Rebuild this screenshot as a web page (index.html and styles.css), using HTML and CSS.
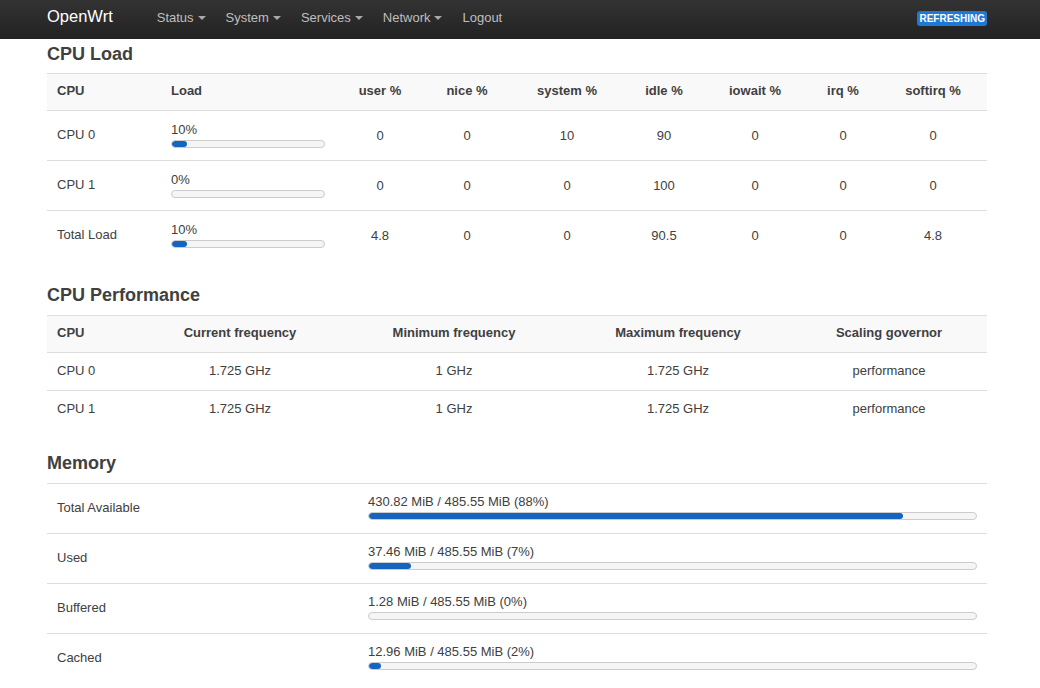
FILE: index.html
```html
<!DOCTYPE html>
<html>
<head>
<meta charset="utf-8">
<link rel="stylesheet" href="styles.css">
</head>
<body>
<header class="navbar">
  <div class="nav-inner">
    <a class="brand">OpenWrt</a>
    <ul class="nav">
      <li><a>Status <span class="caret"></span></a></li>
      <li><a>System <span class="caret"></span></a></li>
      <li><a>Services <span class="caret"></span></a></li>
      <li><a>Network <span class="caret"></span></a></li>
      <li><a>Logout</a></li>
    </ul>
    <span class="badge">REFRESHING</span>
  </div>
</header>
<main class="main">
  <h2>CPU Load</h2>
  <table class="tbl load">
    <colgroup>
      <col style="width:114px"><col style="width:174px"><col style="width:90px"><col style="width:84px"><col style="width:116px"><col style="width:78px"><col style="width:104px"><col style="width:72px"><col style="width:108px">
    </colgroup>
    <thead>
      <tr><th class="l">CPU</th><th class="l">Load</th><th>user %</th><th>nice %</th><th>system %</th><th>idle %</th><th>iowait %</th><th>irq %</th><th>softirq %</th></tr>
    </thead>
    <tbody>
      <tr><td class="l">CPU 0</td><td class="l barcell"><div class="pct">10%</div><div class="bar"><div class="fill" style="width:10%"></div></div></td><td>0</td><td>0</td><td>10</td><td>90</td><td>0</td><td>0</td><td>0</td></tr>
      <tr><td class="l">CPU 1</td><td class="l barcell"><div class="pct">0%</div><div class="bar"><div class="fill" style="width:0%"></div></div></td><td>0</td><td>0</td><td>0</td><td>100</td><td>0</td><td>0</td><td>0</td></tr>
      <tr><td class="l">Total Load</td><td class="l barcell"><div class="pct">10%</div><div class="bar"><div class="fill" style="width:10%"></div></div></td><td>4.8</td><td>0</td><td>0</td><td>90.5</td><td>0</td><td>0</td><td>4.8</td></tr>
    </tbody>
  </table>

  <h2>CPU Performance</h2>
  <table class="tbl perf">
    <colgroup>
      <col style="width:90px"><col style="width:206px"><col style="width:222px"><col style="width:226px"><col style="width:196px">
    </colgroup>
    <thead>
      <tr><th class="l">CPU</th><th>Current frequency</th><th>Minimum frequency</th><th>Maximum frequency</th><th>Scaling governor</th></tr>
    </thead>
    <tbody>
      <tr><td class="l">CPU 0</td><td>1.725 GHz</td><td>1 GHz</td><td>1.725 GHz</td><td>performance</td></tr>
      <tr><td class="l">CPU 1</td><td>1.725 GHz</td><td>1 GHz</td><td>1.725 GHz</td><td>performance</td></tr>
    </tbody>
  </table>

  <h2>Memory</h2>
  <table class="tbl mem">
    <colgroup>
      <col style="width:311px"><col style="width:629px">
    </colgroup>
    <tbody>
      <tr><td class="l">Total Available</td><td class="l barcell"><div class="pct">430.82 MiB / 485.55 MiB (88%)</div><div class="bar"><div class="fill" style="width:88%"></div></div></td></tr>
      <tr><td class="l">Used</td><td class="l barcell"><div class="pct">37.46 MiB / 485.55 MiB (7%)</div><div class="bar"><div class="fill" style="width:7%"></div></div></td></tr>
      <tr><td class="l">Buffered</td><td class="l barcell"><div class="pct">1.28 MiB / 485.55 MiB (0%)</div><div class="bar"><div class="fill" style="width:0%"></div></div></td></tr>
      <tr><td class="l">Cached</td><td class="l barcell"><div class="pct">12.96 MiB / 485.55 MiB (2%)</div><div class="bar"><div class="fill" style="width:2%"></div></div></td></tr>
    </tbody>
  </table>
</main>
</body>
</html>
```

FILE: styles.css
```css
* { box-sizing: border-box; }
html, body { margin: 0; padding: 0; background: #fff; }
body {
  font-family: "Liberation Sans", Arial, sans-serif;
  font-size: 13px;
  color: #404040;
  overflow: hidden;
}
.navbar {
  height: 39px;
  background: linear-gradient(to bottom, #333333, #222222);
}
.nav-inner {
  width: 940px;
  margin-left: 47px;
  height: 39px;
  display: flex;
  align-items: center;
}
.brand {
  font-size: 16.5px;
  color: #ffffff;
  margin-right: 34px;
  line-height: 39px;
  position: relative;
  top: -3px;
}
.nav {
  list-style: none;
  margin: 0;
  padding: 0;
  display: flex;
  flex: 1;
}
.nav a {
  display: flex;
  align-items: center;
  color: #bfbfbf;
  padding: 0 10px;
  line-height: 39px;
  position: relative;
  top: -2px;
}
.caret {
  display: inline-block;
  width: 0;
  height: 0;
  margin-left: 4px;
  margin-top: 1px;
  border-left: 4px solid transparent;
  border-right: 4px solid transparent;
  border-top: 4px solid #a8a8a8;
}
.badge {
  background: #1e78d6;
  color: #fff;
  font-weight: bold;
  font-size: 10px;
  line-height: 13px;
  padding: 1px 2px 1px 2px;
  border-radius: 3px;
  margin-top: -3px;
}
.main {
  width: 940px;
  margin-left: 47px;
  padding-top: 2px;
}
h2 {
  font-size: 18px;
  line-height: 26px;
  margin: 0 0 6px;
  color: #404040;
  font-weight: bold;
}
.perf + h2, .load + h2 { margin-bottom: 7px; }
.tbl {
  width: 940px;
  border-collapse: collapse;
  table-layout: fixed;
  margin-bottom: 22px;
  border-top: 1px solid #dddddd;
}
.tbl th {
  background: #f9f9f9;
  font-weight: bold;
  text-align: center;
  padding: 8px 10px 11px;
  line-height: 17px;
  border-bottom: 1px solid #dddddd;
  color: #404040;
}
.tbl td {
  text-align: center;
  line-height: 17px;
  border-bottom: 1px solid #dddddd;
  vertical-align: top;
}
.tbl .l { text-align: left; }
.load td { padding: 16px 10px 16px; }
.load td.l:first-child { padding: 15px 10px 17px; }
.load td.barcell { padding: 10px 10px 12px; }
.mem td { padding: 15px 10px 17px; }
.mem td.barcell { padding: 9px 10px 13px; }
.perf td { padding: 9px 10px 11px; }
.tbl tbody tr:last-child td { border-bottom: none; }
.pct {
  line-height: 18px;
  white-space: nowrap;
}
.bar {
  height: 8px;
  margin-top: 1px;
  border: 1px solid #cccccc;
  border-radius: 4px;
  background: #f5f5f5;
  overflow: hidden;
}
.fill {
  height: 100%;
  background: #1565c0;
  border-radius: 3px;
}
```
